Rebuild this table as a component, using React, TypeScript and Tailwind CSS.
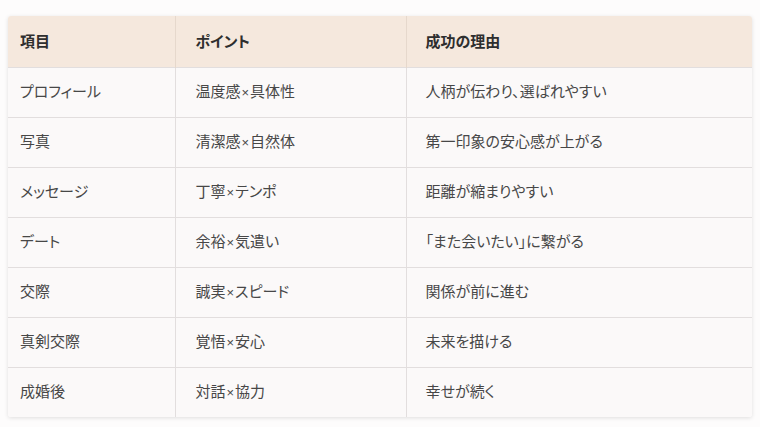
const rows = [
  ["プロフィール", "温度感×具体性", "人柄が伝わり、選ばれやすい"],
  ["写真", "清潔感×自然体", "第一印象の安心感が上がる"],
  ["メッセージ", "丁寧×テンポ", "距離が縮まりやすい"],
  ["デート", "余裕×気遣い", "「また会いたい」に繋がる"],
  ["交際", "誠実×スピード", "関係が前に進む"],
  ["真剣交際", "覚悟×安心", "未来を描ける"],
  ["成婚後", "対話×協力", "幸せが続く"],
];

// the × in the picture is a small half-width one
function Point({ text }: { text: string }) {
  const [a, b] = text.split("×");
  return (
    <>
      {a}
      <span className="mx-[1px] font-['Liberation_Sans',sans-serif] text-[13px]">×</span>
      {b}
    </>
  );
}

export default function App() {
  return (
    <div className="h-[427px] w-[760px] bg-[#fdfcfc] pt-4 pl-2 font-['Noto_Sans_CJK_JP','Noto_Sans',sans-serif] text-[15px] text-[#474747] [font-feature-settings:'palt']">
      <div className="w-[744px] overflow-hidden rounded-[3px] shadow-[0_1px_4px_rgba(0,0,0,0.12)]">
        <table className="w-full table-fixed border-collapse">
          <colgroup>
            <col className="w-[167px]" />
            <col className="w-[231px]" />
            <col className="w-[346px]" />
          </colgroup>
          <thead>
            <tr className="h-[51px] bg-[#f5e8dd] text-left text-[#2e2e2e]">
              <th className="pl-3 font-bold">項目</th>
              <th className="border-l border-[#e6d8cc] pl-5 font-bold">ポイント</th>
              <th className="border-l border-[#e6d8cc] pl-[19px] font-bold">成功の理由</th>
            </tr>
          </thead>
          <tbody className="bg-[#fbf9f9]">
            {rows.map((r) => (
              <tr key={r[0]} className="h-[50px] border-t border-[#e2dede]">
                <td className="pl-3 pb-[2px]">{r[0]}</td>
                <td className="border-l border-[#e2dede] pl-5 pb-[2px]">
                  <Point text={r[1]} />
                </td>
                <td className="border-l border-[#e2dede] pl-[19px] pb-[2px]">{r[2]}</td>
              </tr>
            ))}
          </tbody>
        </table>
      </div>
    </div>
  );
}
